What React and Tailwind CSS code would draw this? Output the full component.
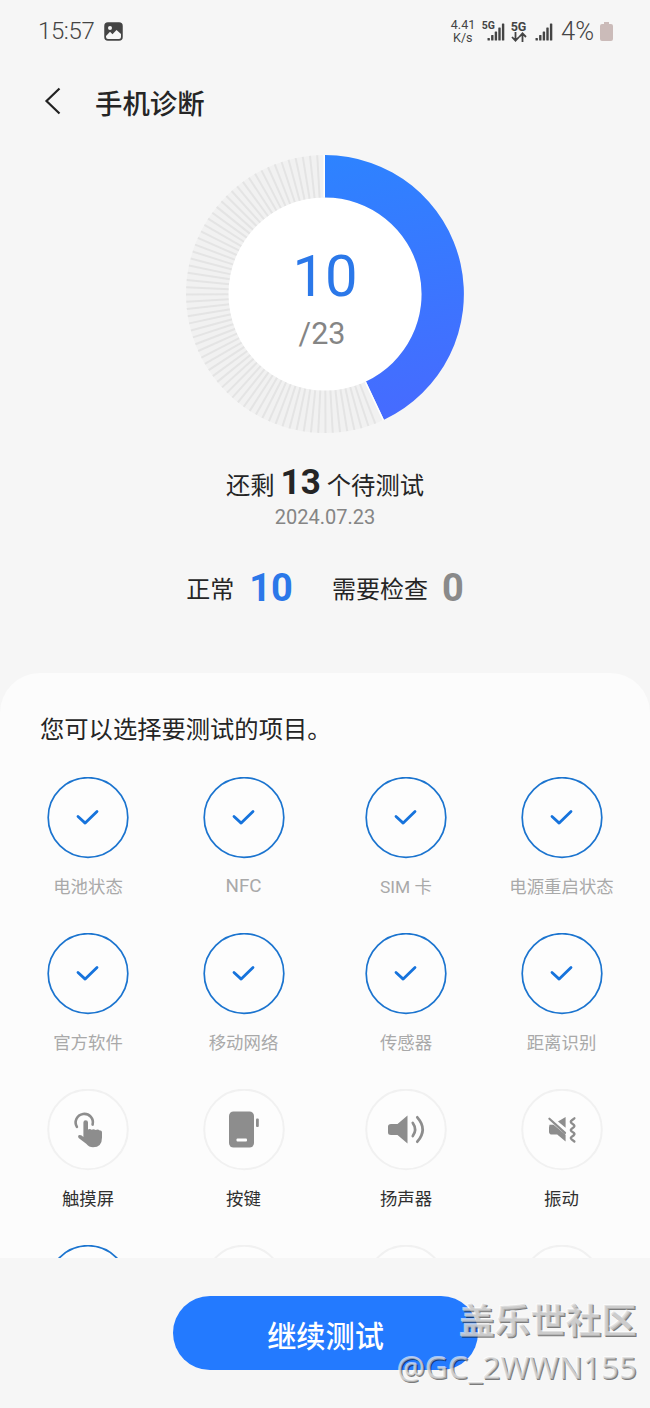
const TICKS = Array.from({ length: 67 }, (_, i) => -3.2 - i * 3);

const signalBars = (
  <svg width="18" height="18" viewBox="0 0 17 18" fill="#444">
    <rect x="0" y="15" width="2.4" height="2.5" rx=".6" />
    <rect x="3.6" y="12" width="2.4" height="5.5" rx=".6" />
    <rect x="7.2" y="8.5" width="2.4" height="9" rx=".6" />
    <rect x="10.8" y="4.5" width="2.4" height="13" rx=".6" />
    <rect x="14.4" y="0.5" width="2.4" height="17" rx=".6" />
  </svg>
);

function StatusBar() {
  return (
    <header className="flex h-[62px] items-center pl-[38px] pr-[37px] text-[#444]">
      <span className="w-[66px] text-[24px] font-light leading-[28px] tracking-[-0.4px]">15:57</span>
      <svg width="19" height="19" viewBox="0 0 19 19">
        <rect x="1" y="1" width="17" height="17" rx="3" fill="#444" stroke="#444" strokeWidth="1.5" />
        <path d="M2 14 6 9.8l2.5 2.5 4-4.2 4.5 4V15q0 2-2 2H4q-2 0-2-2z" fill="#f6f6f6" />
        <circle cx="6" cy="6" r="2" fill="#f6f6f6" />
      </svg>
      <div className="ml-auto flex items-center">
        <div className="w-[24px] text-center text-[12.5px] leading-[13px]">
          <div>4.41</div>
          <div>K/s</div>
        </div>
        <div className="ml-[7px] flex">
          <span className="mt-[-2px] text-[10.5px] font-bold leading-[12px]">5G</span>
          <div className="-ml-[8px] mt-[1px]">{signalBars}</div>
        </div>
        <div className="ml-[5px] flex w-[17px] flex-col items-center">
          <span className="text-[12.5px] font-bold leading-[11px]">5G</span>
          <svg width="16" height="10" viewBox="0 0 16 10" fill="none" stroke="#444" strokeWidth="1.8">
            <path d="M4.5 0v8.5M1 5l3.5 3.7L8 5M11.5 10V1.5M8.2 5l3.3-3.6L15 5" />
          </svg>
        </div>
        <div className="ml-[8px] mt-[1px]">{signalBars}</div>
        <span className="ml-[8px] w-[35px] whitespace-nowrap text-[25.5px] font-light leading-[28px]">4%</span>
        <svg className="ml-[4px]" width="13" height="19" viewBox="0 0 13 19" fill="#cbbbb9">
          <path d="M4 0h5v2h2q2 0 2 2v13q0 2-2 2H2q-2 0-2-2V4q0-2 2-2h2z" />
        </svg>
      </div>
    </header>
  );
}

function Ring() {
  return (
    <div className="mx-auto grid h-[280px] w-[280px] place-items-center">
      <svg className="col-start-1 row-start-1" width="280" height="280" viewBox="-140 -140 280 280">
        <defs>
          <linearGradient id="arc" gradientUnits="userSpaceOnUse" x1="0" y1="-139" x2="60" y2="126">
            <stop offset="0" stopColor="#2d83ff" />
            <stop offset="1" stopColor="#466bff" />
          </linearGradient>
        </defs>
        <circle r="117.5" fill="none" stroke="#f1f1f1" strokeWidth="43" />
        {TICKS.map((deg) => (
          <path key={deg} d="M0-96V-139" stroke="#e4e4e4" strokeWidth="2" transform={`rotate(${deg})`} />
        ))}
        <circle r="96.5" fill="#fff" />
        <path d="M0-139A139 139 0 0 1 59 125.8L41 87.4A96.5 96.5 0 0 0 0-96.5Z" fill="url(#arc)" />
        <path d="M-.8-139V-97M58.3 126.2 40.5 88.2" stroke="#fff" strokeWidth="1.5" />
      </svg>
      <div className="col-start-1 row-start-1 text-center">
        <div className="mt-[12px] text-[58px] leading-[60px] text-[#2b78e9]">10</div>
        <div className="mt-[8px] pr-[6px] text-[30.5px] leading-[40px] text-[#858585]">/23</div>
      </div>
    </div>
  );
}

const icons = {
  check: (
    <path d="m-10-1 7.2 6.6L9-6" fill="none" stroke="#1673dc" strokeWidth="2.8" strokeLinecap="round" strokeLinejoin="round" />
  ),
  touch: (
    <g>
      <path d="M-11.1-2.6A8.6 8.6 0 1 1 4.6-4.9" fill="none" stroke="#8d8d8d" strokeWidth="2.6" strokeLinecap="round" />
      <path d="M-4.6-7q0-2.2 2.3-2.2T0-7V0q2-1.2 3.6.3 2-1.2 4 .3 2.2-1.2 4.2.4Q14 .4 14 3V8q0 9.8-9 9.8-4 0-6.8-3.6L-9.4 8.6q-1.4-2.6 1-3Q-6.5 5.4-4.6 7.4z" fill="#8d8d8d" />
    </g>
  ),
  keys: (
    <g>
      <rect x="-15" y="-18" width="25" height="36" rx="4.5" fill="#8d8d8d" />
      <rect x="-7.5" y="9" width="10.5" height="3" rx="1" fill="#fff" />
      <rect x="12" y="-11" width="2.8" height="8.5" rx="1" fill="#8d8d8d" />
    </g>
  ),
  speaker: (
    <g>
      <path d="M1.5-14V14L-8.5 5.5H-15Q-18 5.5-18 3V-3Q-18-5.5-15-5.5H-8.5Z" fill="#8d8d8d" />
      <path d="M6.8-6.6Q11.4 0 6.8 6.6M11.3-12.2Q22 0 11.3 12.2" fill="none" stroke="#8d8d8d" strokeWidth="2.7" strokeLinecap="round" />
    </g>
  ),
  vibrate: (
    <g>
      <path d="M3.6-12.5V-1.8L-4-8ZM-12.5-4.8H-8.4L3.6 5.2V12L-4.8 5H-10Q-13 5-13 2.2V-2Z" fill="#8d8d8d" />
      <path d="M-12.6-10.8 3 3.4" stroke="#8d8d8d" strokeWidth="2.2" strokeLinecap="round" />
      <path d="M12.4-11.2 9.6-9Q8-7.8 9.6-6.4L11.8-4.6Q13-3.5 11.8-2.4L9.6-.7Q8 .6 9.6 1.8L11.8 3.4Q13 4.6 11.8 5.8L9.6 7.4Q8 8.6 9.6 9.8L12.4 12" fill="none" stroke="#8d8d8d" strokeWidth="2.3" strokeLinecap="round" />
    </g>
  ),
};

const tests = [
  ["电池状态", "check"], ["NFC", "check"], ["SIM 卡", "check"], ["电源重启状态", "check"],
  ["官方软件", "check"], ["移动网络", "check"], ["传感器", "check"], ["距离识别", "check"],
  ["触摸屏", "touch"], ["按键", "keys"], ["扬声器", "speaker"], ["振动", "vibrate"],
  ["", "check"], ["", "keys"], ["", "speaker"], ["", "touch"],
];

function TestItem({ label, icon }) {
  const done = icon === "check";
  const latin = label === "NFC";
  return (
    <div className="flex h-[156px] flex-col items-center">
      <svg className="shrink-0" width="82" height="82" viewBox="-41 -40.5 82 82">
        <circle r="39.8" fill="#fdfdfd" stroke={done ? "#1b74cf" : "#f1f1f1"} strokeWidth={done ? 1.7 : 2} />
        {icons[icon]}
      </svg>
      <span className={`whitespace-nowrap leading-[24px] ${latin ? "mt-[15px] text-[18.8px]" : "mt-[16px] text-[17.4px]"} ${done ? "text-[#a9a9a9]" : "text-[#303030]"}`}>
        {label}
      </span>
    </div>
  );
}

export default function App() {
  return (
    <div className="relative flex h-[1408px] w-[650px] flex-col overflow-hidden bg-[#f6f6f6] font-['Roboto','Noto_Sans_CJK_SC',sans-serif] text-[#252525]">
      <StatusBar />
      <div className="flex h-[82px] items-center pl-[44px]">
        <svg className="mb-[4px]" width="18" height="28" viewBox="0 0 18 28" fill="none" stroke="#222" strokeWidth="2.2">
          <path d="M15.5 1.5 2.5 14l13 12.5" />
        </svg>
        <h1 className="ml-[33px] mt-[4px] text-[27.4px] font-medium leading-[36px]">手机诊断</h1>
      </div>
      <div className="pt-[10px]">
        <Ring />
      </div>
      <div className="mt-[28px] flex h-[42px] items-baseline justify-center whitespace-pre text-[24.3px] leading-[42px]">
        还剩 <b className="text-[35px] font-bold">13</b> 个待测试
      </div>
      <div className="mt-[1px] text-center text-[20px] leading-[24px] text-[#858585]">2024.07.23</div>
      <div className="mt-[34px] flex h-[48px] items-center justify-center text-[24px] leading-[48px]">
        <span className="mt-[5px]">正常</span>
        <b className="ml-[15px] mt-[1px] text-[38px] text-[#2b78e9]">10</b>
        <span className="ml-[39px] mt-[5px]">需要检查</span>
        <b className="ml-[14px] mt-[1px] text-[38px] text-[#8a8a8a]">0</b>
      </div>
      <section className="mt-[62px] h-[585px] overflow-hidden rounded-t-[40px] bg-[#fcfcfc]">
        <h2 className="pl-[40px] pt-[39px] text-[24.3px] font-normal leading-[36px]">您可以选择要测试的项目。</h2>
        <div className="mt-[29px] grid grid-cols-[156px_155px_170px_141px] pl-[10px]">
          {tests.map(([label, icon], i) => (
            <TestItem key={i} label={label} icon={icon} />
          ))}
        </div>
      </section>
      <footer className="flex flex-1 items-start pl-[173px] pt-[38px]">
        <button className="h-[74px] w-[305px] rounded-full bg-[#237aff] pt-[8px] text-[29.2px] font-medium leading-[66px] text-white">继续测试</button>
      </footer>
      <div className="absolute bottom-[19px] right-[13px] text-right text-[#cfcfcf]/60 [text-shadow:-1px_-1px_0_rgba(255,255,255,0.6),1px_1px_0_rgba(0,0,0,0.5)]">
        <div className="text-[35.5px] font-bold leading-[46px]">盖乐世社区</div>
        <div className="font-['Noto_Sans',sans-serif] text-[31.5px] leading-[44px]">@GC_2WWN155</div>
      </div>
    </div>
  );
}
